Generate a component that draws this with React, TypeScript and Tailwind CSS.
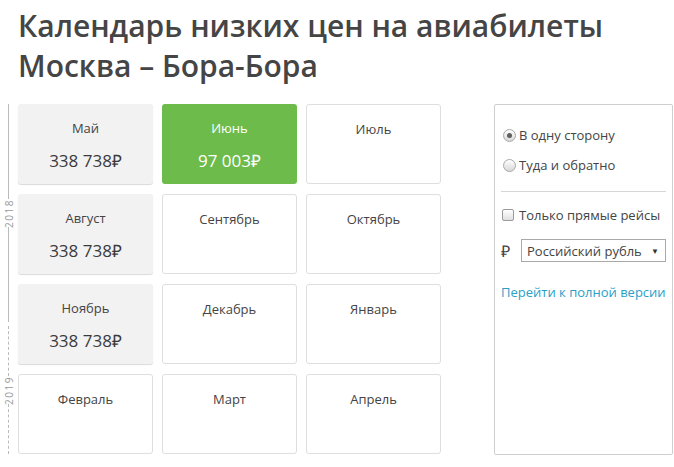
const months = [
  { name: "Май", price: "338 738₽", kind: "filled" },
  { name: "Июнь", price: "97 003₽", kind: "best" },
  { name: "Июль", price: "", kind: "empty" },
  { name: "Август", price: "338 738₽", kind: "filled" },
  { name: "Сентябрь", price: "", kind: "empty" },
  { name: "Октябрь", price: "", kind: "empty" },
  { name: "Ноябрь", price: "338 738₽", kind: "filled" },
  { name: "Декабрь", price: "", kind: "empty" },
  { name: "Январь", price: "", kind: "empty" },
  { name: "Февраль", price: "", kind: "empty" },
  { name: "Март", price: "", kind: "empty" },
  { name: "Апрель", price: "", kind: "empty" },
];

function MonthCard({ name, price, kind }: { name: string; price: string; kind: string }) {
  const box =
    kind === "best"
      ? "bg-[#6dbb4b] text-white"
      : kind === "filled"
        ? "bg-[#f2f2f2] text-[#444] shadow-[0_1px_1px_rgba(0,0,0,0.15)]"
        : "bg-white text-[#444] border border-[#dedede]";
  return (
    <div className={`w-[135px] h-[80px] rounded-[3px] flex flex-col items-center pt-[15px] ${box}`}>
      <div className="text-[13px] leading-[18px]">{name}</div>
      {price && (
        <div className={`mt-[12px] text-[17px] leading-[24px] ${kind === "best" ? "" : "text-[#3a3a3a]"}`}>
          {price}
        </div>
      )}
    </div>
  );
}

function YearSegment({ year, dashed, className }: { year: string; dashed?: boolean; className: string }) {
  const line = dashed ? "flex-1 border-l border-dashed border-[#bbb]" : "flex-1 border-l border-[#bbb]";
  return (
    <div className={`flex flex-col items-center ${className}`}>
      <div className={line} />
      <div className="py-[3px] text-[10px] leading-[10px] text-[#9a9a9a] tracking-[1.5px] [writing-mode:vertical-rl] rotate-180">
        {year}
      </div>
      <div className={line} />
    </div>
  );
}

function Radio({ checked }: { checked?: boolean }) {
  return (
    <span className="w-[13px] h-[13px] rounded-full border border-[#a8a8a8] bg-gradient-to-b from-white to-[#d8d8d8] flex items-center justify-center shrink-0">
      {checked && <span className="w-[5px] h-[5px] rounded-full bg-[#606060]" />}
    </span>
  );
}

export default function App() {
  return (
    <div className="w-[674px] h-[467px] bg-white font-['Open_Sans',sans-serif] text-[#444] overflow-hidden">
      <h1 className="pl-[18px] pt-[6px] text-[30px] leading-[40px] font-semibold text-[#454545]">
        Календарь низких цен на авиабилеты
        <br />
        Москва – Бора-Бора
      </h1>

      <div className="mt-[18px] flex items-start">
        <div className="w-[17px] h-[350px] flex flex-col gap-[4px]">
          <YearSegment year="2018" className="h-[218px]" />
          <YearSegment year="2019" dashed className="flex-1" />
        </div>

        <div className="ml-[1px] grid grid-cols-[repeat(3,135px)] gap-x-[9px] gap-y-[10px]">
          {months.map((m) => (
            <MonthCard key={m.name} {...m} />
          ))}
        </div>

        <div className="ml-[53px] w-[179px] h-[351px] border border-[#cfcfcf] rounded-[2px] px-[6px] pt-[20px] text-[13px] leading-[18px]">
          <label className="flex items-center gap-[3px] h-[20px] pl-[2px]">
            <Radio checked />
            <span>В одну сторону</span>
          </label>
          <label className="mt-[10px] flex items-center gap-[3px] h-[20px] pl-[2px]">
            <Radio />
            <span>Туда и обратно</span>
          </label>
          <div className="mt-[16px] border-t border-[#d6d6d6]" />
          <label className="mt-[13px] flex items-center gap-[5px] h-[20px] pl-[1px]">
            <span className="w-[12px] h-[12px] rounded-[2px] border border-[#9a9a9a] bg-gradient-to-b from-white to-[#e0e0e0] shrink-0" />
            <span>Только прямые рейсы</span>
          </label>
          <div className="mt-[14px] flex items-center">
            <span className="w-[20px] text-[16px] text-[#444]">₽</span>
            <div className="flex-1 h-[23px] border border-[#a9a9a9] flex items-center justify-between pl-[5px] pr-[6px]">
              <span>Российский рубль</span>
              <span className="text-[8px] text-[#333]">▼</span>
            </div>
          </div>
          <div className="mt-[21px] text-[#2b9fc7]">Перейти к полной версии</div>
        </div>
      </div>
    </div>
  );
}
